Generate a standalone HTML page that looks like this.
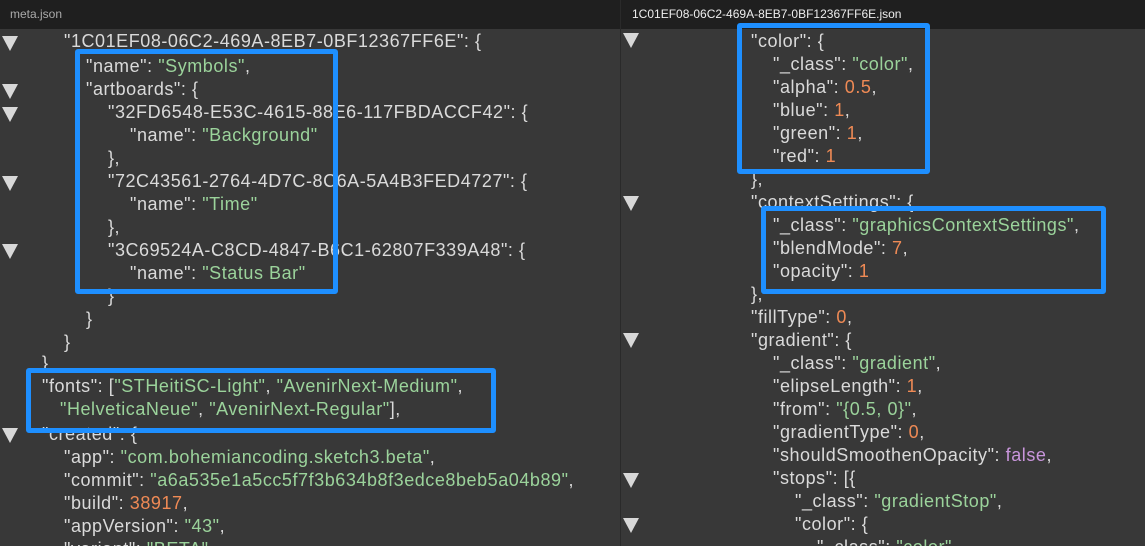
<!DOCTYPE html><html><head><meta charset="utf-8"><style>
html,body{margin:0;width:1145px;height:546px;overflow:hidden}
body{background:#383838;font-family:"Liberation Sans",sans-serif;position:relative}
.tab{position:absolute;top:0;height:29px;background:#1f1f1f;color:#bbb;font-size:12px;line-height:29px;z-index:5}
.l{position:absolute;font-size:18px;line-height:23px;color:#dadada;white-space:pre;letter-spacing:0.55px}
.s{color:#9bd39b}.n{color:#ef8a55}.b{color:#c996dc}
.t{position:absolute;width:0;height:0;border-left:8px solid transparent;border-right:8px solid transparent;border-top:15px solid #d8d8d8}
.box{position:absolute;border:5px solid #1e8fff;border-radius:3px;box-sizing:border-box}
.div{position:absolute;left:620px;top:0;width:1px;height:546px;background:#2a2a2a;z-index:6}
</style></head><body>
<div class="tab" style="left:0;width:620px;padding-left:10px;box-sizing:border-box;color:#aaa">meta.json</div>
<div class="tab" style="left:621px;width:524px;padding-left:11px;box-sizing:border-box;color:#eee">1C01EF08-06C2-469A-8EB7-0BF12367FF6E.json</div>
<div class="div"></div>

<div class="l" style="left:64px;top:30px">"1C01EF08-06C2-469A-8EB7-0BF12367FF6E": {</div>
<div class="l" style="left:86px;top:55px">"name": <span class="s">"Symbols"</span>,</div>
<div class="l" style="left:86px;top:78px">"artboards": {</div>
<div class="l" style="left:108px;top:101px">"32FD6548-E53C-4615-88E6-117FBDACCF42": {</div>
<div class="l" style="left:130px;top:124px">"name": <span class="s">"Background"</span></div>
<div class="l" style="left:108px;top:147px">},</div>
<div class="l" style="left:108px;top:170px">"72C43561-2764-4D7C-8C6A-5A4B3FED4727": {</div>
<div class="l" style="left:130px;top:193px">"name": <span class="s">"Time"</span></div>
<div class="l" style="left:108px;top:216px">},</div>
<div class="l" style="left:108px;top:239px">"3C69524A-C8CD-4847-B6C1-62807F339A48": {</div>
<div class="l" style="left:130px;top:262px">"name": <span class="s">"Status Bar"</span></div>
<div class="l" style="left:108px;top:285px">}</div>
<div class="l" style="left:86px;top:308px">}</div>
<div class="l" style="left:64px;top:331px">}</div>
<div class="l" style="left:42px;top:352px">}</div>
<div class="l" style="left:42px;top:375px">"fonts": [<span class="s">"STHeitiSC-Light"</span>, <span class="s">"AvenirNext-Medium"</span>,</div>
<div class="l" style="left:60px;top:398px"><span class="s">"HelveticaNeue"</span>, <span class="s">"AvenirNext-Regular"</span>],</div>
<div class="l" style="left:42px;top:423px">"created": {</div>
<div class="l" style="left:64px;top:446px">"app": <span class="s">"com.bohemiancoding.sketch3.beta"</span>,</div>
<div class="l" style="left:64px;top:469px">"commit": <span class="s">"a6a535e1a5cc5f7f3b634b8f3edce8beb5a04b89"</span>,</div>
<div class="l" style="left:64px;top:492px">"build": <span class="n">38917</span>,</div>
<div class="l" style="left:64px;top:515px">"appVersion": <span class="s">"43"</span>,</div>
<div class="l" style="left:64px;top:538px">"variant": <span class="s">"BETA"</span>,</div>

<div class="t" style="left:2px;top:36px"></div>
<div class="t" style="left:2px;top:84px"></div>
<div class="t" style="left:2px;top:107px"></div>
<div class="t" style="left:2px;top:176px"></div>
<div class="t" style="left:2px;top:244px"></div>
<div class="t" style="left:2px;top:428px"></div>

<div class="l" style="left:751px;top:30px">"color": {</div>
<div class="l" style="left:773px;top:53px">"_class": <span class="s">"color"</span>,</div>
<div class="l" style="left:773px;top:76px">"alpha": <span class="n">0.5</span>,</div>
<div class="l" style="left:773px;top:99px">"blue": <span class="n">1</span>,</div>
<div class="l" style="left:773px;top:122px">"green": <span class="n">1</span>,</div>
<div class="l" style="left:773px;top:145px">"red": <span class="n">1</span></div>
<div class="l" style="left:751px;top:168px">},</div>
<div class="l" style="left:751px;top:191px">"contextSettings": {</div>
<div class="l" style="left:773px;top:214px">"_class": <span class="s">"graphicsContextSettings"</span>,</div>
<div class="l" style="left:773px;top:237px">"blendMode": <span class="n">7</span>,</div>
<div class="l" style="left:773px;top:260px">"opacity": <span class="n">1</span></div>
<div class="l" style="left:751px;top:283px">},</div>
<div class="l" style="left:751px;top:306px">"fillType": <span class="n">0</span>,</div>
<div class="l" style="left:751px;top:329px">"gradient": {</div>
<div class="l" style="left:773px;top:352px">"_class": <span class="s">"gradient"</span>,</div>
<div class="l" style="left:773px;top:375px">"elipseLength": <span class="n">1</span>,</div>
<div class="l" style="left:773px;top:398px">"from": <span class="s">"{0.5, 0}"</span>,</div>
<div class="l" style="left:773px;top:421px">"gradientType": <span class="n">0</span>,</div>
<div class="l" style="left:773px;top:444px">"shouldSmoothenOpacity": <span class="b">false</span>,</div>
<div class="l" style="left:773px;top:467px">"stops": [{</div>
<div class="l" style="left:795px;top:490px">"_class": <span class="s">"gradientStop"</span>,</div>
<div class="l" style="left:795px;top:513px">"color": {</div>
<div class="l" style="left:817px;top:536px">"_class": <span class="s">"color"</span>,</div>

<div class="t" style="left:623px;top:33px"></div>
<div class="t" style="left:623px;top:196px"></div>
<div class="t" style="left:623px;top:333px"></div>
<div class="t" style="left:623px;top:473px"></div>
<div class="t" style="left:623px;top:518px"></div>

<div class="box" style="left:75px;top:49px;width:263px;height:245px"></div>
<div class="box" style="left:26px;top:368px;width:470px;height:65px"></div>
<div class="box" style="left:737px;top:23px;width:193px;height:151px;z-index:7"></div>
<div class="box" style="left:761px;top:206px;width:345px;height:88px"></div>
</body></html>
